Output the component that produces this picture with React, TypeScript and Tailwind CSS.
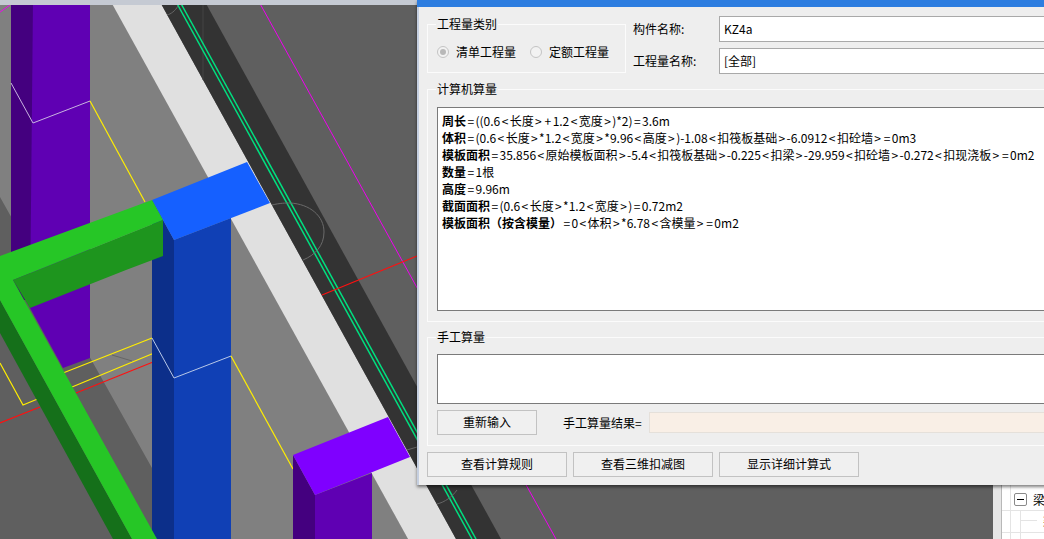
import React from "react";

const cjk = { fontFamily: '"Noto Sans CJK SC", "Noto Sans", sans-serif' };

const Scene = () => (
  <svg className="absolute left-0 top-0" width="1044" height="539" viewBox="0 0 1044 539" shapeRendering="geometricPrecision">
    <rect width="1044" height="539" fill="#5f5f5f" />
    {/* light floor */}
    <polygon points="0,0 113,0 408,539 152,539 152,468 0,197" fill="#808080" />
    {/* white band */}
    <polygon points="110,0 159,0 456,539 408,539" fill="#e0e0e0" />
    {/* dark band */}
    <polygon points="159,0 204,0 501,539 456,539" fill="#333333" />
    <line x1="203" y1="5" x2="203" y2="80" stroke="#444444" />
    <line x1="175" y1="0" x2="472" y2="539" stroke="#00e080" strokeWidth="1.5" />
    <line x1="179" y1="0" x2="476" y2="539" stroke="#00e080" strokeWidth="1.5" />
    <line x1="258" y1="0" x2="556" y2="539" stroke="#f000f0" />
    <line x1="0" y1="12" x2="10" y2="5" stroke="#f000f0" />
    <path d="M272 205 C 280 203 286 203 290 203 C 310 204 324 216 324 232 C 324 246 315 255 303 260" fill="none" stroke="#6a6a6a" />
    <path d="M167 15 C 171 14 175 11 178 6" fill="none" stroke="#666666" />
    <line x1="407" y1="450" x2="417" y2="447" stroke="#666666" />
    <path d="M437 504 C 445 502 452 497 457 490" fill="none" stroke="#666666" />
    <line x1="322" y1="295" x2="417" y2="256" stroke="#ff1010" strokeWidth="1.2" />

    {/* purple column, back left */}
    <polygon points="11,0 33,0 33,300 11,300" fill="#44007f" />
    <polygon points="33,0 90,0 90,358 63,368 30,308" fill="#5f00b3" />
    <polyline points="11,83 33,123 90,101" fill="none" stroke="#c8b4e0" />
    <line x1="90" y1="101" x2="145" y2="202" stroke="#ffee00" strokeWidth="1.2" />

    {/* yellow and red outlines */}
    <polyline points="0,363 23,405 40,398" fill="none" stroke="#ffee00" strokeWidth="1.2" />
    <line x1="63" y1="373" x2="152" y2="338" stroke="#ffee00" strokeWidth="1.2" />
    <line x1="72" y1="387" x2="159" y2="351" stroke="#ffee00" strokeWidth="1.2" />
    <line x1="0" y1="423" x2="40" y2="407" stroke="#ff1010" strokeWidth="1.2" />
    <line x1="76" y1="393" x2="163" y2="358" stroke="#ff1010" strokeWidth="1.2" />
    <line x1="112" y1="355" x2="132" y2="361" stroke="#666666" />

    {/* blue column */}
    <polygon points="152,200 174,240 174,539 152,539" fill="#0c2f8a" />
    <polygon points="174,240 231,218 231,539 174,539" fill="#1040b5" />
    <polygon points="152,200 247,162 270,203 174,240" fill="#1560ff" />
    <polyline points="152,338 174,378 231,356" fill="none" stroke="#b8c8e8" />
    <line x1="231" y1="356" x2="293" y2="469" stroke="#ffee00" strokeWidth="1.2" />

    {/* green beams */}
    <polygon points="163,220 163,256 126,270 30,308 13,280" fill="#1e951e" />
    <polygon points="0,300 132,539 113,539 0,333" fill="#15701a" />
    <polygon points="0,256 152,200 163,220 13,280 157,539 132,539 0,300" fill="#26c626" />

    {/* purple column, front */}
    <polygon points="293,455 315,495 315,539 293,539" fill="#44007f" />
    <polygon points="315,495 372,473 372,539 315,539" fill="#5f00b3" />
    <polygon points="293,455 388,417 410,457 315,495" fill="#7f00ff" />

    <rect width="417" height="5" fill="#c5cad3" />
  </svg>
);

const GroupBox = ({ title, className, children }: { title: string; className: string; children: React.ReactNode }) => (
  <fieldset className={`shrink-0 min-w-0 border border-[#fbfbfb] ${className}`}>
    <legend className="ml-[8px] px-[1px] h-[16px] leading-[15px]">{title}</legend>
    {children}
  </fieldset>
);

const Radio = ({ checked, label }: { checked?: boolean; label: string }) => (
  <div className="flex shrink-0 items-center gap-[7px] whitespace-nowrap">
    <span className="flex h-[12px] w-[12px] items-center justify-center rounded-full border border-[#c4c4c4] bg-[#f2f2f2]">
      {checked && <span className="h-[6px] w-[6px] rounded-full bg-[#b8b8b8]" />}
    </span>
    <span>{label}</span>
  </div>
);

const Btn = ({ label, className }: { label: string; className: string }) => (
  <button className={`border border-[#c2c2c2] bg-[#f0f0f0] pb-px text-center text-black ${className}`}>{label}</button>
);

// the < > = signs sit wider in the original font
const Spaced = ({ text }: { text: string }) => (
  <>
    {text.split(/([<>=+])/).map((part, i) =>
      /^[<>=+]$/.test(part) ? (
        <span key={i} className="px-[1.4px]">
          {part}
        </span>
      ) : (
        part
      )
    )}
  </>
);

const formula: [string, string][] = [
  ["周长", "=((0.6<长度>+1.2<宽度>)*2)=3.6m"],
  ["体积", "=(0.6<长度>*1.2<宽度>*9.96<高度>)-1.08<扣筏板基础>-6.0912<扣砼墙>=0m3"],
  ["模板面积", "=35.856<原始模板面积>-5.4<扣筏板基础>-0.225<扣梁>-29.959<扣砼墙>-0.272<扣现浇板>=0m2"],
  ["数量", "=1根"],
  ["高度", "=9.96m"],
  ["截面面积", "=(0.6<长度>*1.2<宽度>)=0.72m2"],
  ["模板面积（按含模量）", "=0<体积>*6.78<含模量>=0m2"],
];

const TreePanel = () => (
  <div className="absolute left-[993px] top-[485px] flex h-[54px] w-[51px] overflow-hidden bg-[#e6e6e6]" style={cjk}>
    <div className="ml-[8px] relative w-full border-l border-[#b8b8b8] bg-white text-[12px] text-black">
      <div className="absolute left-[8px] top-0 h-full w-px bg-[#e4e4e4]" />
      <div className="absolute left-[18px] top-[25px] h-full w-px bg-[#e4e4e4]" />
      <div className="absolute left-0 top-[25px] h-px w-full bg-[#e4e4e4]" />
      <div className="absolute left-0 top-[47px] h-px w-full bg-[#e4e4e4]" />
      <div className="absolute left-[18px] top-[35px] h-px w-[17px] bg-[#e4e4e4]" />
      <div className="absolute left-[12px] top-[8px] flex h-[13px] w-[13px] items-center justify-center rounded-[2px] border border-[#8a8a8a] bg-white">
        <span className="h-px w-[7px] bg-black" />
      </div>
      <span className="absolute left-[31px] top-[6px] leading-[17px]">梁</span>
      <span className="absolute left-[41px] top-[27px] leading-[17px]">梁</span>
    </div>
  </div>
);

const App = () => {
  return (
    <div className="relative h-[539px] w-[1044px] overflow-hidden bg-[#5f5f5f]">
      <Scene />
      <TreePanel />
      <div
        className="absolute left-[417px] top-0 flex h-[485px] w-[660px] flex-col border-l-2 border-[#c5cfe0] bg-[#eeeeee] text-[12px] text-black shadow-[0_2px_3px_rgba(0,0,0,0.5)]"
        style={cjk}
      >
        <div className="-ml-[2px] h-[7px] bg-[#2d7de0]" />
        <div className="flex flex-col px-[8px]">
          <div className="mt-[9px] flex">
            <GroupBox title="工程量类别" className="h-[57px] w-[199px]">
              <div className="mt-[11px] flex gap-[14px] pl-[9px]">
                <Radio checked label="清单工程量" />
                <Radio label="定额工程量" />
              </div>
            </GroupBox>
            <div className="ml-[7px] flex flex-col gap-[6px]">
              <div className="flex h-[26px] items-center">
                <span className="w-[86px] shrink-0">构件名称:</span>
                <div className="flex h-[26px] w-[400px] items-center border border-[#a9a9a9] bg-white pl-[4px]">KZ4a</div>
              </div>
              <div className="flex h-[26px] items-center">
                <span className="w-[86px] shrink-0">工程量名称:</span>
                <div className="flex h-[26px] w-[400px] items-center border border-[#a9a9a9] bg-white pl-[4px]">[全部]</div>
              </div>
            </div>
          </div>

          <GroupBox title="计算机算量" className="mt-[7px] h-[241px]">
            <div className="mx-[9px] mt-[10px] h-[204px] border border-[#7a7a7a] bg-white pl-[4px] pt-[4px]">
              {formula.map(([name, rest]) => (
                <div key={name} className="h-[17px] whitespace-nowrap leading-[17px]">
                  <span className="font-bold">{name}</span>
                  <Spaced text={rest} />
                </div>
              ))}
            </div>
          </GroupBox>

          <GroupBox title="手工算量" className="mt-[7px] h-[117px]">
            <div className="mx-[9px] mt-[9px] h-[50px] border border-[#7a7a7a] bg-white" />
            <div className="ml-[9px] mt-[6px] flex items-center">
              <Btn label="重新输入" className="h-[25px] w-[100px]" />
              <span className="ml-[26px]">手工算量结果=</span>
              <div className="ml-[7px] h-[21px] w-[400px] border border-[#e5e0da] bg-[#f9efe6]" />
            </div>
          </GroupBox>

          <div className="mt-[6px] flex gap-[6px]">
            <Btn label="查看计算规则" className="h-[25px] w-[140px]" />
            <Btn label="查看三维扣减图" className="h-[25px] w-[140px]" />
            <Btn label="显示详细计算式" className="h-[25px] w-[140px]" />
          </div>
        </div>
      </div>
    </div>
  );
};

export default App;
